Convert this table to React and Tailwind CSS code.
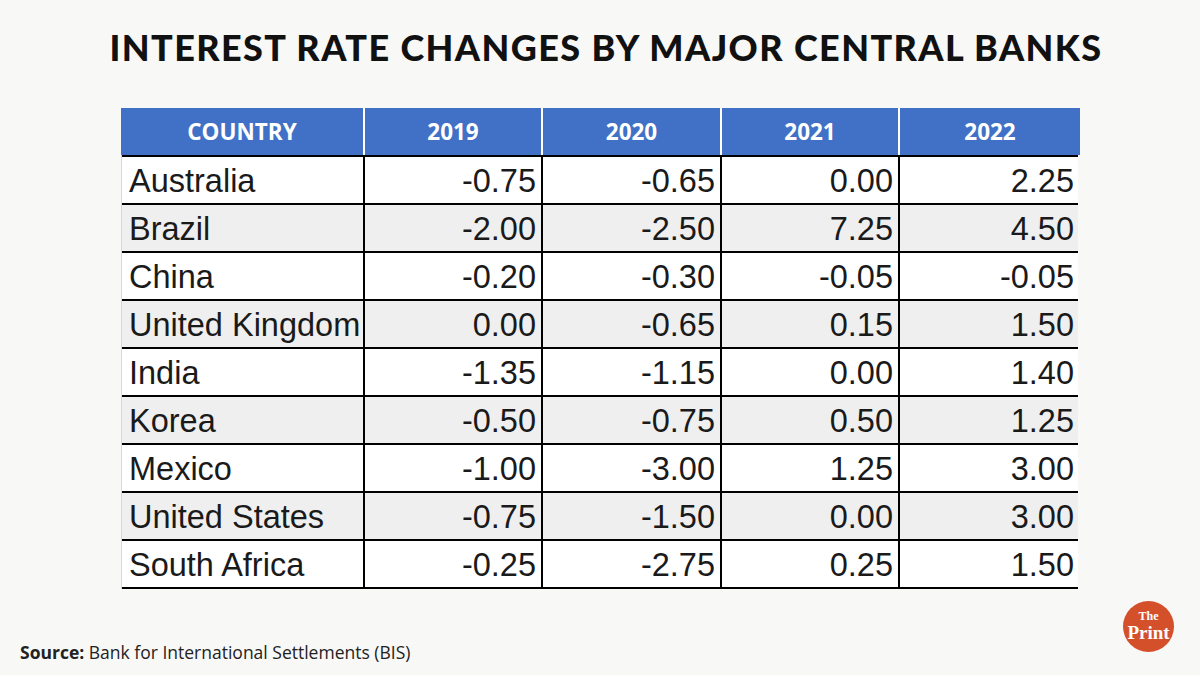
import React from 'react'

const rows = [
  ['Australia', '-0.75', '-0.65', '0.00', '2.25'],
  ['Brazil', '-2.00', '-2.50', '7.25', '4.50'],
  ['China', '-0.20', '-0.30', '-0.05', '-0.05'],
  ['United Kingdom', '0.00', '-0.65', '0.15', '1.50'],
  ['India', '-1.35', '-1.15', '0.00', '1.40'],
  ['Korea', '-0.50', '-0.75', '0.50', '1.25'],
  ['Mexico', '-1.00', '-3.00', '1.25', '3.00'],
  ['United States', '-0.75', '-1.50', '0.00', '3.00'],
  ['South Africa', '-0.25', '-2.75', '0.25', '1.50'],
]

const headers = ['COUNTRY', '2019', '2020', '2021', '2022']

const App = () => {
  return (
    <div className="w-[1200px] h-[675px] bg-[#f8f8f7] flex flex-col overflow-hidden">
      <h1 className="text-center text-[36px] font-black tracking-[1.4px] text-[#111] pt-[24px] leading-[46px] font-['Lato',sans-serif] pl-[12px]">
        INTEREST RATE CHANGES BY MAJOR CENTRAL BANKS
      </h1>

      <div className="ml-[121px] mt-[38px] w-[959px]">
        <div className="grid grid-cols-[244px_178px_179px_178px_180px] h-[47px] bg-[#4171c6] text-white font-['Open_Sans',sans-serif] font-bold text-[22.5px]">
          {headers.map((h, i) => (
            <div
              key={h}
              className={'flex items-center justify-center ' + (i < 4 ? 'border-r-2 border-white' : '')}
            >
              {h}
            </div>
          ))}
        </div>
        <div className="w-[957px] border-l border-[#d8d8d8]">
          {rows.map((r, ri) => (
            <div
              key={r[0]}
              className={
                'grid grid-cols-[243px_178px_179px_178px_179px] h-[48px] border-t-2 border-black font-["Liberation_Sans",Arial,sans-serif] text-[32.5px] text-[#1a1a1a] ' +
                (ri % 2 === 1 ? 'bg-[#efefef]' : 'bg-white') +
                (ri === rows.length - 1 ? ' border-b-2 h-[50px]' : '')
              }
            >
              {r.map((c, ci) => (
                <div
                  key={ci}
                  className={
                    'flex items-center leading-none pt-[2px] whitespace-nowrap ' +
                    (ci === 0 ? 'justify-start pl-[7px] border-r-2 border-black' : 'justify-end pr-[5px]') +
                    (ci > 0 && ci < 4 ? ' border-r-2 border-black' : '')
                  }
                >
                  {c}
                </div>
              ))}
            </div>
          ))}
        </div>
      </div>

      <div className="flex items-end justify-between mt-auto pl-[20px] pr-[26px] pb-[12px]">
        <p className="text-[17.5px] text-[#222] font-['Open_Sans',sans-serif] -mb-[2px]">
          <span className="font-bold">Source:</span> Bank for International Settlements (BIS)
        </p>
        <div className="w-[51px] h-[51px] rounded-full bg-[#d4502a] flex flex-col items-center justify-center text-white font-['Liberation_Serif',serif] font-bold mb-[11px]">
          <span className="text-[12px] leading-[13px]">The</span>
          <span className="text-[19px] leading-[20px]">Print</span>
        </div>
      </div>
    </div>
  )
}

export default App
